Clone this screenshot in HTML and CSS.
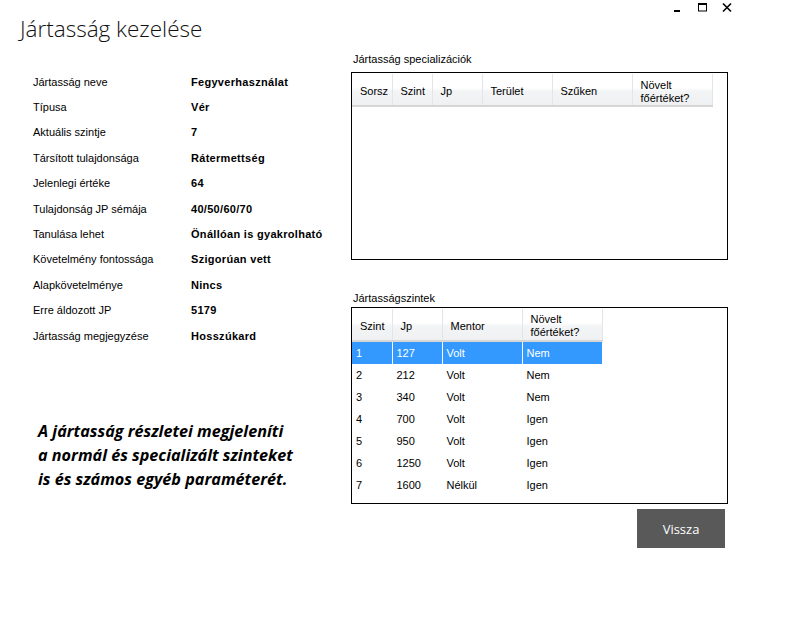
FILE: index.html
```html
<!DOCTYPE html>
<html lang="hu">
<head>
<meta charset="utf-8">
<title>Jártasság kezelése</title>
<link rel="stylesheet" href="styles.css">
</head>
<body>
<div class="window">
  <header class="titlebar">
    <h1 class="title">Jártasság kezelése</h1>
    <svg class="controls" width="62" height="14" viewBox="0 0 62 14" aria-hidden="true">
      <rect x="2" y="10" width="6" height="2" fill="#000"/>
      <rect x="26.5" y="3.5" width="8" height="7.5" fill="none" stroke="#000" stroke-width="1"/>
      <rect x="26" y="3" width="9" height="2" fill="#000"/>
      <path d="M51 3.5 L59 11.5 M59 3.5 L51 11.5" stroke="#000" stroke-width="1.6" fill="none"/>
    </svg>
  </header>
  <div class="content">
    <div class="left">
      <div class="props">
        <div class="row"><span class="label">Jártasság neve</span><span class="value">Fegyverhasználat</span></div>
        <div class="row"><span class="label">Típusa</span><span class="value">Vér</span></div>
        <div class="row"><span class="label">Aktuális szintje</span><span class="value">7</span></div>
        <div class="row"><span class="label">Társított tulajdonsága</span><span class="value">Rátermettség</span></div>
        <div class="row"><span class="label">Jelenlegi értéke</span><span class="value">64</span></div>
        <div class="row"><span class="label">Tulajdonság JP sémája</span><span class="value">40/50/60/70</span></div>
        <div class="row"><span class="label">Tanulása lehet</span><span class="value">Önállóan is gyakrolható</span></div>
        <div class="row"><span class="label">Követelmény fontossága</span><span class="value">Szigorúan vett</span></div>
        <div class="row"><span class="label">Alapkövetelménye</span><span class="value">Nincs</span></div>
        <div class="row"><span class="label">Erre áldozott JP</span><span class="value">5179</span></div>
        <div class="row"><span class="label">Jártasság megjegyzése</span><span class="value">Hosszúkard</span></div>
      </div>
      <p class="note">A jártasság részletei megjeleníti<br>a normál és specializált szinteket<br>is és számos egyéb paraméterét.</p>
    </div>
    <div class="right">
      <div class="group-label first">Jártasság specializációk</div>
      <div class="listbox spec">
        <table class="grid spec-table">
          <colgroup>
            <col class="w40"><col class="w40"><col class="w50"><col class="w70"><col class="w80"><col class="w80">
          </colgroup>
          <thead>
            <tr><th>Sorsz</th><th>Szint</th><th>Jp</th><th>Terület</th><th>Szűken</th><th class="two">Növelt<br>főértéket?</th></tr>
          </thead>
        </table>
      </div>
      <div class="group-label second">Jártasságszintek</div>
      <div class="listbox levels">
        <table class="grid levels-table">
          <colgroup>
            <col class="w40"><col class="w50"><col class="w80"><col class="w80">
          </colgroup>
          <thead>
            <tr><th>Szint</th><th>Jp</th><th>Mentor</th><th class="two">Növelt<br>főértéket?</th></tr>
          </thead>
          <tbody>
            <tr class="selected"><td>1</td><td>127</td><td>Volt</td><td>Nem</td></tr>
            <tr><td>2</td><td>212</td><td>Volt</td><td>Nem</td></tr>
            <tr><td>3</td><td>340</td><td>Volt</td><td>Nem</td></tr>
            <tr><td>4</td><td>700</td><td>Volt</td><td>Igen</td></tr>
            <tr><td>5</td><td>950</td><td>Volt</td><td>Igen</td></tr>
            <tr><td>6</td><td>1250</td><td>Volt</td><td>Igen</td></tr>
            <tr><td>7</td><td>1600</td><td>Nélkül</td><td>Igen</td></tr>
          </tbody>
        </table>
      </div>
      <div class="actions"><button class="btn" type="button">Vissza</button></div>
    </div>
  </div>
</div>
</body>
</html>
```
FILE: styles.css
```css
* { box-sizing: border-box; }
html, body { margin: 0; padding: 0; background: #fff; }
body {
  width: 790px;
  height: 630px;
  overflow: hidden;
  font-family: "Liberation Sans", Arial, sans-serif;
  font-size: 11px;
  color: #000;
}
.window { width: 790px; height: 630px; }

.titlebar {
  height: 50px;
  display: flex;
  justify-content: space-between;
  align-items: flex-start;
}
.title {
  margin: 0;
  padding: 14px 0 0 20px;
  font-family: "Open Sans", sans-serif;
  font-weight: 300;
  font-size: 22.5px;
  line-height: 30px;
  color: #111;
}
.controls { margin: 0 56px 0 0; display: block; }

.content { display: flex; }
.left { width: 318px; margin-left: 33px; padding-top: 19px; }
.props { display: flex; flex-direction: column; }
.row { display: flex; height: 25.4px; align-items: center; }
.label { width: 158px; }
.value { font-weight: bold; letter-spacing: 0.3px; }

.note {
  margin: 71px 0 0 5px;
  font-family: "Open Sans", sans-serif;
  font-style: italic;
  font-weight: 700;
  font-size: 16.2px;
  line-height: 24px;
  color: #000;
}

.right { width: 377px; display: flex; flex-direction: column; }
.group-label { line-height: 13px; padding-left: 2px; }
.group-label.first { margin-top: 3px; margin-bottom: 6px; }
.group-label.second { margin-top: 32px; margin-bottom: 2px; }

.listbox {
  border: 1px solid #000;
  padding: 1px 0 0 0;
  overflow: hidden;
}
.listbox.spec { height: 188px; }
.listbox.levels { height: 197px; }

.grid { border-collapse: collapse; table-layout: fixed; }
.spec-table { width: 360px; }
.levels-table { width: 250px; }
.w40 { width: 40px; }
.w50 { width: 50px; }
.w70 { width: 70px; }
.w80 { width: 80px; }

.grid th {
  height: 32px;
  padding: 3px 0 0 8px;
  text-align: left;
  font-weight: normal;
  line-height: 13px;
  vertical-align: middle;
  background: linear-gradient(#ffffff 0%, #ffffff 45%, #f3f4f5 55%, #eff0f1 100%);
  border-right: 1px solid #e4e5e7;
  border-bottom: 2px solid #d6d6d6;
  white-space: nowrap;
  overflow: hidden;
}
.spec-table th { padding-top: 4px; }
.grid td {
  height: 22px;
  padding: 0 0 0 4px;
  line-height: 22px;
  border-right: 1px solid #fff;
  white-space: nowrap;
}
.grid tr.selected td { background: #3399ff; color: #fff; }

.actions { display: flex; justify-content: flex-end; margin-top: 5px; padding-right: 3px; }
.btn {
  width: 88px;
  height: 39px;
  border: none;
  background: #595959;
  color: #fff;
  font-family: "Open Sans", sans-serif;
  font-size: 13px;
  padding: 0;
}
```
